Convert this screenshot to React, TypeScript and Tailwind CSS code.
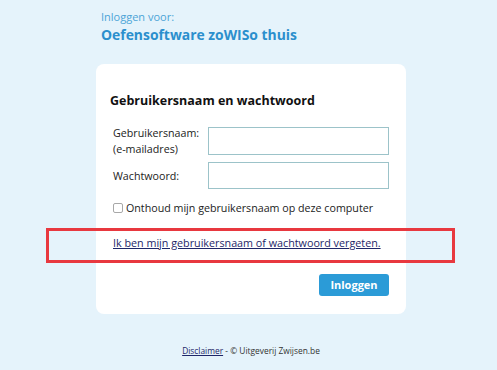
import React from "react";

export default function App() {
  return (
    <div
      className="w-[497px] h-[370px] bg-[#e5f3fb] overflow-hidden text-[#222]"
      style={{ fontFamily: '"Open Sans", "Noto Sans", sans-serif' }}
    >
      <div className="ml-[101px] pt-[10px]">
        <div className="text-[11px] leading-[14px] text-[#4ca4d7]">Inloggen voor:</div>
        <div className="mt-[2px] text-[13.9px] leading-[18px] font-bold text-[#2b8fcd]">
          Oefensoftware zoWISo thuis
        </div>
      </div>

      <div className="ml-[96px] mt-[20px] w-[310px] h-[250px] rounded-[8px] bg-white pt-[28px] pl-[14px] pr-[17px]">
        <div className="text-[12.5px] leading-[18px] font-bold text-[#111]">
          Gebruikersnaam en wachtwoord
        </div>

        <div className="pl-[3px]">
          <div className="mt-[15px] flex items-center h-[32px]">
            <div className="w-[95px] text-[10.7px] leading-[16px]">
              Gebruikersnaam:
              <br />
              (e-mailadres)
            </div>
            <div className="w-[181px] h-[28px] border border-[#9cc3c9] bg-white" />
          </div>

          <div className="mt-[5px] flex items-center h-[27px]">
            <div className="w-[95px] text-[10.7px] leading-[16px]">Wachtwoord:</div>
            <div className="w-[181px] h-[27px] border border-[#9cc3c9] bg-white" />
          </div>

          <div className="mt-[11px] flex items-center text-[10.7px] leading-[16px] whitespace-nowrap">
            <span className="inline-block w-[10px] h-[10px] border border-[#a8a8a8] rounded-[2px] bg-white mr-[3px]" />
            <span>Onthoud mijn gebruikersnaam op deze computer</span>
          </div>

          <div className="relative mt-[19px] text-[10.75px] leading-[16px] whitespace-nowrap">
            <a href="#" className="underline text-[#1e2668]">
              Ik ben mijn gebruikersnaam of wachtwoord vergeten.
            </a>
            <div className="absolute -left-[67px] -top-[7px] w-[409px] h-[35px] border-[3px] border-[#e8383f] pointer-events-none" />
          </div>

          <div className="mt-[23px] flex justify-end">
            <button className="w-[70px] h-[22px] rounded-[3px] bg-[#2b9bd7] text-white text-[11px] font-bold leading-[22px]">
              Inloggen
            </button>
          </div>
        </div>
      </div>

      <div className="ml-[96px] mt-[30px] w-[310px] text-center text-[8.4px] leading-[14px] text-[#333]">
        <a href="#" className="underline text-[#1e2668]">Disclaimer</a> - © Uitgeverij Zwijsen.be
      </div>
    </div>
  );
}
